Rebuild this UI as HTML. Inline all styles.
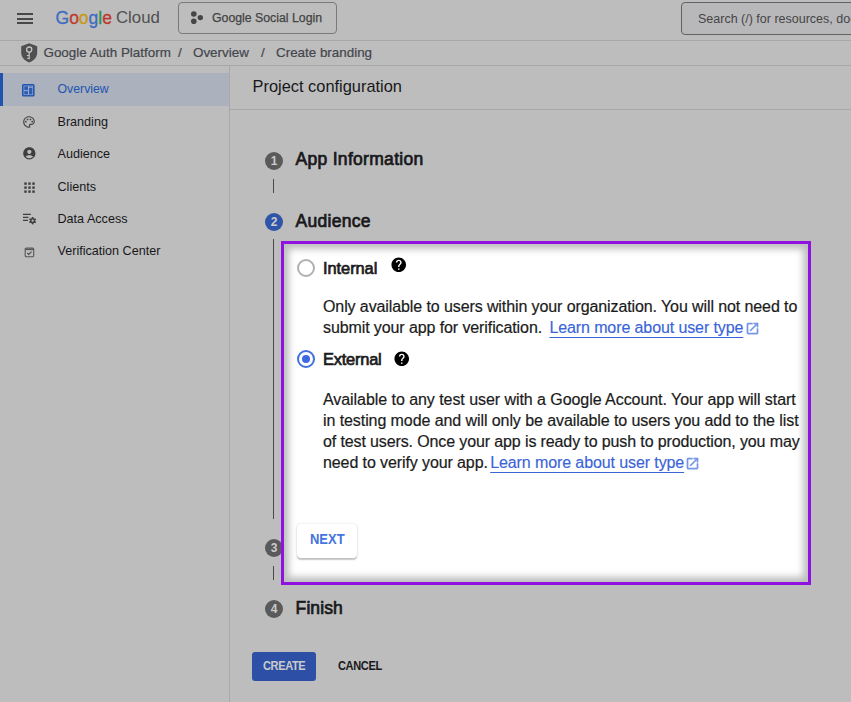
<!DOCTYPE html>
<html><head><meta charset="utf-8">
<style>
*{box-sizing:border-box;margin:0;padding:0}
html,body{width:851px;height:702px;overflow:hidden;background:#bdbdbd;font-family:"Liberation Sans",sans-serif;color:#18181b}
.a{position:absolute;white-space:nowrap}
.hl{position:absolute;background:#a8a8a8}
</style></head><body>
<!-- header -->
<div class="hl" style="left:0;top:40px;width:851px;height:1px"></div>
<div class="a" style="left:17px;top:13.2px;width:16px;height:2px;background:#484848"></div>
<div class="a" style="left:17px;top:17.76px;width:16px;height:2px;background:#484848"></div>
<div class="a" style="left:17px;top:22.3px;width:16px;height:2px;background:#484848"></div>
<div class="a" style="left:55.5px;top:8px;font-size:17.5px;line-height:20px;letter-spacing:0px;-webkit-text-stroke:0.3px currentColor"><span style="color:#3d6cc4">G</span><span style="color:#bd392d">o</span><span style="color:#c89a12">o</span><span style="color:#3d6cc4">g</span><span style="color:#2f8f48">l</span><span style="color:#bd392d">e</span></div>
<div class="a" style="left:116px;top:8px;font-size:16.8px;line-height:20px;color:#505050">Cloud</div>
<div class="a" style="left:178px;top:2px;width:159px;height:32px;border:1px solid #7a7a7a;border-radius:4px"></div>
<svg class="a" style="left:190px;top:11px" width="14" height="14" viewBox="0 0 14 14"><circle cx="3.8" cy="3" r="2.8" fill="#464646"/><circle cx="10.3" cy="6.6" r="2.7" fill="#464646"/><circle cx="3.8" cy="10.2" r="2.8" fill="#464646"/></svg>
<div class="a" style="left:212px;top:10.3px;font-size:12.3px;line-height:16px;color:#444;-webkit-text-stroke:0.25px #444">Google Social Login</div>
<div class="a" style="left:681px;top:2px;width:200px;height:33px;border:1px solid #626262;border-radius:4px;background:#b8b8bb"></div>
<div class="a" style="left:698px;top:11px;font-size:12.5px;line-height:16px;color:#454545">Search (/) for resources, docs, products, and more</div>
<!-- breadcrumb -->
<div class="hl" style="left:0;top:65px;width:851px;height:1px"></div>
<svg class="a" style="left:20.6px;top:42.8px" width="17" height="20" viewBox="0 0 17 20"><path d="M8.2 0.3 L16.2 3.3 V9.6 C16.2 14.2 13 18 8.2 19.5 C3.4 18 0.2 14.2 0.2 9.6 V3.3 Z" fill="#4f4f4f"/><circle cx="8.2" cy="6.6" r="2.6" fill="none" stroke="#c4c4c4" stroke-width="1.3"/><path d="M8.2 9.1 V16.3" stroke="#c4c4c4" stroke-width="1.2" fill="none"/><path d="M8 12.5 H5.9 M8 15.3 H6.1" stroke="#c4c4c4" stroke-width="1" fill="none"/></svg>
<div class="a" style="left:43.5px;top:45px;font-size:13.4px;line-height:16px;color:#43464c;-webkit-text-stroke:0.2px #43464c">Google Auth Platform</div>
<div class="a" style="left:178px;top:45px;font-size:13.4px;line-height:16px;color:#43464c;-webkit-text-stroke:0.2px #43464c">/</div>
<div class="a" style="left:193px;top:45px;font-size:13.4px;line-height:16px;color:#43464c;-webkit-text-stroke:0.2px #43464c">Overview</div>
<div class="a" style="left:261px;top:45px;font-size:13.4px;line-height:16px;color:#43464c;-webkit-text-stroke:0.2px #43464c">/</div>
<div class="a" style="left:276px;top:45px;font-size:13.4px;line-height:16px;color:#43464c;-webkit-text-stroke:0.2px #43464c">Create branding</div>
<!-- sidebar -->
<div class="hl" style="left:229px;top:66px;width:1px;height:636px"></div>
<div class="a" style="left:0;top:73px;width:229px;height:33px;background:#abb1bd"></div>
<div class="a" style="left:0;top:73px;width:3px;height:33px;background:#1f53ad"></div>
<div class="a" style="left:57.5px;top:81px;font-size:12.3px;line-height:16px;color:#2255b0">Overview</div>
<div class="a" style="left:57.5px;top:114px;font-size:12.6px;line-height:16px">Branding</div>
<div class="a" style="left:57.5px;top:146px;font-size:12.6px;line-height:16px">Audience</div>
<div class="a" style="left:57.5px;top:179px;font-size:12.6px;line-height:16px">Clients</div>
<div class="a" style="left:57.5px;top:211px;font-size:12.6px;line-height:16px">Data Access</div>
<div class="a" style="left:57.5px;top:243px;font-size:12.6px;line-height:16px">Verification Center</div>
<!-- sidebar icons -->
<svg class="a" style="left:21.6px;top:83.6px" width="13" height="13" viewBox="0 0 13 13"><rect x="0" y="0" width="12.6" height="12.6" rx="1.6" fill="#1f53b0"/><rect x="1.9" y="1.9" width="8.8" height="8.8" fill="#2f5cb3" stroke="#8ea2ca" stroke-width="0.8"/><path d="M6.5 1.9 V10.7 M1.9 6.6 H6.5 M6.5 3.3 H10.7" stroke="#a9b5cf" stroke-width="0.9" fill="none"/></svg>
<svg class="a" style="left:22px;top:115px" width="14" height="14" viewBox="0 0 24 24"><path fill="#464646" d="M12 22C6.49 22 2 17.51 2 12S6.49 2 12 2s10 4.04 10 9c0 3.31-2.69 6-6 6h-1.77c-.28 0-.5.22-.5.5 0 .12.05.23.13.33.41.47.64 1.060.64 1.67 0 1.38-1.12 2.5-2.5 2.5zm0-18c-4.41 0-8 3.59-8 8s3.59 8 8 8c.28 0 .5-.22.5-.5 0-.16-.08-.28-.14-.35-.41-.46-.63-1.05-.63-1.65 0-1.38 1.12-2.5 2.5-2.5H16c2.21 0 4-1.790 4-4 0-3.860-3.590-7-8-7z"/><circle cx="6.5" cy="11.5" r="1.5" fill="#464646"/><circle cx="9.5" cy="7.5" r="1.5" fill="#464646"/><circle cx="14.5" cy="7.5" r="1.5" fill="#464646"/><circle cx="17.5" cy="11.5" r="1.5" fill="#464646"/></svg>
<svg class="a" style="left:21.6px;top:146.2px" width="14.7" height="14.7" viewBox="0 0 24 24"><path fill="#3e3e3e" d="M12 2C6.48 2 2 6.480 2 12s4.48 10 10 10 10-4.48 10-10S17.52 2 12 2zm0 4c1.93 0 3.5 1.57 3.5 3.5S13.93 13 12 13s-3.5-1.57-3.5-3.5S10.07 6 12 6zm0 14c-2.03 0-4.43-.82-6.14-2.88C7.55 15.8 9.68 15 12 15s4.45.8 6.14 2.12C16.43 19.18 14.03 20 12 20z"/></svg>
<svg class="a" style="left:23.6px;top:181.6px" width="12" height="12" viewBox="0 0 12 12" fill="#3e3e3e"><rect x="0.3" y="0.4" width="2.4" height="2.4"/><rect x="4.3" y="0.4" width="2.4" height="2.4"/><rect x="8.3" y="0.4" width="2.4" height="2.4"/><rect x="0.3" y="4.4" width="2.4" height="2.4"/><rect x="4.3" y="4.4" width="2.4" height="2.4"/><rect x="8.3" y="4.4" width="2.4" height="2.4"/><rect x="0.3" y="8.4" width="2.4" height="2.4"/><rect x="4.3" y="8.4" width="2.4" height="2.4"/><rect x="8.3" y="8.4" width="2.4" height="2.4"/></svg>
<svg class="a" style="left:22px;top:212px" width="15" height="13" viewBox="0 0 15 13"><path d="M1 2.4 H8.8 M1 5.4 H6.5 M1 8.3 H6" stroke="#3e3e3e" stroke-width="1.3" fill="none"/><g transform="translate(10.6 8.7)" fill="#3e3e3e"><circle r="2.6"/><rect x="-0.8" y="-3.7" width="1.6" height="7.4"/><rect x="-0.8" y="-3.7" width="1.6" height="7.4" transform="rotate(60)"/><rect x="-0.8" y="-3.7" width="1.6" height="7.4" transform="rotate(120)"/><circle r="1.1" fill="#bdbdbd"/></g></svg>
<svg class="a" style="left:24px;top:247px" width="11" height="11" viewBox="0 0 11 11"><rect x="1.2" y="1.1" width="8.5" height="8.6" rx="1" fill="none" stroke="#565656" stroke-width="1.1"/><path d="M1.2 2.5 H9.7" stroke="#565656" stroke-width="1.2"/><path d="M3.3 6 L4.8 7.4 L7.5 4.7" stroke="#4e4e4e" stroke-width="1.2" fill="none"/></svg>
<!-- main -->
<div class="hl" style="left:230px;top:109px;width:621px;height:1px"></div>
<div class="a" style="left:252.5px;top:77.3px;font-size:16.4px;line-height:18px">Project configuration</div>
<!-- stepper -->
<div class="a" style="left:265px;top:152px;width:18px;height:18px;border-radius:50%;background:#5a5a5a;color:#cbcbcb;font-size:12px;line-height:18px;text-align:center;font-weight:bold">1</div>
<div class="a" style="left:273px;top:179px;width:1px;height:14px;background:#4a4a4a"></div>
<div class="a" style="left:295.5px;top:149.3px;font-size:17.5px;line-height:20px;letter-spacing:0.3px;-webkit-text-stroke:0.7px #18181b">App Information</div>
<div class="a" style="left:265px;top:213px;width:18px;height:18px;border-radius:50%;background:#2e55a8;color:#cbcbcb;font-size:12px;line-height:18px;text-align:center;font-weight:bold">2</div>
<div class="a" style="left:295.5px;top:210.5px;font-size:17.5px;line-height:20px;letter-spacing:0.3px;-webkit-text-stroke:0.7px #18181b">Audience</div>
<div class="a" style="left:273px;top:239px;width:1px;height:280px;background:#4a4a4a"></div>
<div class="a" style="left:265px;top:539px;width:18px;height:18px;border-radius:50%;background:#5a5a5a;color:#cbcbcb;font-size:12px;line-height:18px;text-align:center;font-weight:bold">3</div>
<div class="a" style="left:273px;top:566px;width:1px;height:14px;background:#4a4a4a"></div>
<div class="a" style="left:265px;top:600px;width:18px;height:18px;border-radius:50%;background:#5a5a5a;color:#cbcbcb;font-size:12px;line-height:18px;text-align:center;font-weight:bold">4</div>
<div class="a" style="left:295.6px;top:597.8px;font-size:17.5px;line-height:20px;letter-spacing:0.1px;-webkit-text-stroke:0.7px #18181b">Finish</div>
<!-- buttons -->
<div class="a" style="left:252px;top:652px;width:64px;height:29px;border-radius:3px;background:#2d50a6"></div>
<div class="a" style="left:263px;top:659px;font-size:12px;line-height:14px;font-weight:bold;letter-spacing:-0.4px;color:#cacaca;transform:scaleX(0.92);transform-origin:0 0">CREATE</div>
<div class="a" style="left:338px;top:659px;font-size:12px;line-height:14px;font-weight:bold;letter-spacing:-0.4px;color:#18181b;transform:scaleX(0.92);transform-origin:0 0">CANCEL</div>
<!-- highlight box -->
<div class="a" style="left:281px;top:241px;width:530px;height:343.8px;border:3px solid #9012e0;background:#fff;box-shadow:inset 0 0 7.6px 4.9px rgba(0,0,0,0.259)"></div>
<div class="a" style="left:297px;top:259px;width:18px;height:18px;border-radius:50%;border:2px solid #b0b0b0"></div>
<div class="a" style="left:323px;top:257.5px;font-size:16.4px;line-height:20px;letter-spacing:-0.05px;color:#1b1b1b;-webkit-text-stroke:0.7px #1b1b1b">Internal</div>
<svg class="a" style="left:390px;top:256.4px" width="17.5" height="17.5" viewBox="0 0 24 24"><path fill="#000" d="M12 2C6.48 2 2 6.48 2 12s4.48 10 10 10 10-4.48 10-10S17.52 2 12 2zm1 17h-2v-2h2v2zm2.07-7.75l-.9.92C13.45 12.9 13 13.5 13 15h-2v-.5c0-1.1.45-2.1 1.17-2.83l1.24-1.26c.37-.36.59-.86.59-1.41 0-1.1-.9-2-2-2s-2 .9-2 2H8c0-2.21 1.79-4 4-4s4 1.79 4 4c0 .88-.36 1.68-.93 2.25z"/></svg>
<div class="a" style="left:323px;top:296px;font-size:16px;line-height:21px;letter-spacing:-0.1px;color:#1b1b1b;-webkit-text-stroke:0.2px #1b1b1b">Only available to users within your organization. You will not need to<br>submit your app for verification. <span style="margin-left:3px;color:#3a64d8;-webkit-text-stroke:0.15px #3a64d8;text-decoration:underline;text-underline-offset:4px">Learn more about user type</span><svg style="display:inline-block;vertical-align:-2.9px;margin-left:1.2px" width="15" height="15" viewBox="0 0 24 24"><path fill="#7896e6" stroke="#7896e6" stroke-width="0.7" d="M19 19H5V5h7V3H5c-1.11 0-2 .9-2 2v14c0 1.1.89 2 2 2h14c1.1 0 2-.9 2-2v-7h-2v7zM14 3v2h3.590l-9.830 9.830 1.410 1.410L19 6.410V10h2V3h-7z"/></svg></div>
<div class="a" style="left:297px;top:350.3px;width:18px;height:18px;border-radius:50%;border:2px solid #4170e0"></div>
<div class="a" style="left:302px;top:355px;width:8px;height:8px;border-radius:50%;background:#3d6ae0"></div>
<div class="a" style="left:323px;top:349px;font-size:16.4px;line-height:20px;letter-spacing:-0.2px;color:#1b1b1b;-webkit-text-stroke:0.7px #1b1b1b">External</div>
<svg class="a" style="left:393.1px;top:349.5px" width="17.5" height="17.5" viewBox="0 0 24 24"><path fill="#000" d="M12 2C6.48 2 2 6.48 2 12s4.48 10 10 10 10-4.48 10-10S17.52 2 12 2zm1 17h-2v-2h2v2zm2.07-7.75l-.9.92C13.45 12.9 13 13.5 13 15h-2v-.5c0-1.1.45-2.1 1.17-2.83l1.24-1.26c.37-.36.59-.86.59-1.41 0-1.1-.9-2-2-2s-2 .9-2 2H8c0-2.21 1.79-4 4-4s4 1.79 4 4c0 .88-.36 1.68-.93 2.25z"/></svg>
<div class="a" style="left:323px;top:390px;font-size:16px;line-height:20.9px;letter-spacing:-0.1px;color:#1b1b1b;-webkit-text-stroke:0.2px #1b1b1b"><span style="letter-spacing:-0.055px">Available to any test user with a Google Account. Your app will start</span><br><span style="letter-spacing:-0.08px">in testing mode and will only be available to users you add to the list</span><br><span style="letter-spacing:-0.12px">of test users. Once your app is ready to push to production, you may</span><br>need to verify your app. <span style="margin-left:-2px;color:#3a64d8;-webkit-text-stroke:0.15px #3a64d8;text-decoration:underline;text-underline-offset:4px">Learn more about user type</span><svg style="display:inline-block;vertical-align:-2.9px;margin-left:1.2px" width="15" height="15" viewBox="0 0 24 24"><path fill="#7896e6" stroke="#7896e6" stroke-width="0.7" d="M19 19H5V5h7V3H5c-1.11 0-2 .9-2 2v14c0 1.1.89 2 2 2h14c1.1 0 2-.9 2-2v-7h-2v7zM14 3v2h3.590l-9.830 9.830 1.410 1.410L19 6.410V10h2V3h-7z"/></svg></div>
<div class="a" style="left:297px;top:524px;width:60px;height:33.5px;border-radius:4px;background:#fff;box-shadow:0 1.5px 1.5px rgba(0,0,0,0.22),0 0 2.5px rgba(0,0,0,0.12)"></div>
<div class="a" style="left:309.6px;top:531px;font-size:14.4px;line-height:16px;font-weight:bold;color:#4474dc;transform:scaleX(0.9);transform-origin:0 0">NEXT</div>
</body></html>
